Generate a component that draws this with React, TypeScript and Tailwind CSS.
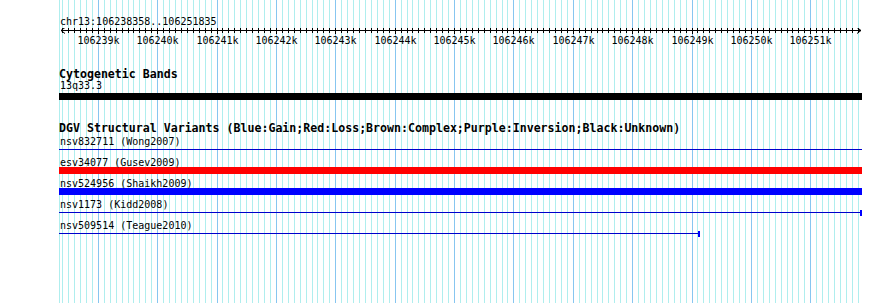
const START = 106238358;
const END = 106251835;
const X0 = 60.2;
const PX = 0.05937;

function toX(bp: number) {
  return Math.floor(X0 + (bp - START) * PX) + 0.5;
}

const ticks: number[] = [];
for (let bp = Math.ceil(START / 100) * 100; bp <= END; bp += 100) ticks.push(bp);

interface Variant {
  id: string;
  study: string;
  kind: "line" | "bar";
  color: string;
  end: number;
  cap: boolean;
}

const variants: Variant[] = [
  { id: "nsv832711", study: "Wong2007", kind: "line", color: "bg-[#0000cc]", end: 862, cap: false },
  { id: "esv34077", study: "Gusev2009", kind: "bar", color: "bg-[#ff0000]", end: 862, cap: false },
  { id: "nsv524956", study: "Shaikh2009", kind: "bar", color: "bg-[#0000ff]", end: 862, cap: false },
  { id: "nsv1173", study: "Kidd2008", kind: "line", color: "bg-[#0000cc]", end: 862, cap: true },
  { id: "nsv509514", study: "Teague2010", kind: "line", color: "bg-[#0000cc]", end: 700, cap: true },
];

function Grid() {
  return (
    <svg className="absolute inset-0" width={890} height={303} shapeRendering="crispEdges">
      <line x1={59.5} y1={0} x2={59.5} y2={303} stroke="#afeeee" />
      {ticks.map((bp) => (
        <line
          key={bp}
          x1={toX(bp)}
          y1={0}
          x2={toX(bp)}
          y2={303}
          stroke={bp % 1000 === 0 ? "#87c6f0" : "#afeeee"}
        />
      ))}
    </svg>
  );
}

function Axis() {
  const majors = ticks.filter((bp) => bp % 1000 === 0);
  return (
    <svg className="relative block" width={890} height={20}>
      <g shapeRendering="crispEdges" stroke="#000">
        <line x1={61} y1={2.5} x2={861} y2={2.5} />
        {ticks.map((bp) => (
          <line key={bp} x1={toX(bp)} y1={0} x2={toX(bp)} y2={bp % 1000 === 0 ? 6 : 5} />
        ))}
      </g>
      <polyline points="65,-0.5 61,2.5 65,5.5" fill="none" stroke="#000" />
      <polyline points="857,-0.5 861,2.5 857,5.5" fill="none" stroke="#000" />
      {majors.map((bp) => (
        <text
          key={bp}
          x={toX(bp)}
          y={16}
          textAnchor="middle"
          fontSize={10}
          fontFamily="'DejaVu Sans Mono', monospace"
          fill="#000"
        >
          {bp / 1000}k
        </text>
      ))}
    </svg>
  );
}

function VariantRow({ v }: { v: Variant }) {
  return (
    <div className="mb-[4px]">
      <div className="h-[10px] pl-[60px] text-[10px] leading-[12px] whitespace-pre">
        {v.id} ({v.study})
      </div>
      {v.kind === "bar" ? (
        <div className={`ml-[59px] h-[7px] w-[803px] ${v.color}`} />
      ) : (
        <div className="ml-[59px] flex h-[7px] items-start">
          <div className={`mt-[3px] h-px ${v.color}`} style={{ width: v.end - 59 - (v.cap ? 2 : 0) }} />
          {v.cap && <div className="mt-[1px] h-[6px] w-[2px] bg-[#0000ff]" />}
        </div>
      )}
    </div>
  );
}

export default function App() {
  return (
    <div className="relative h-[303px] w-[890px] overflow-hidden bg-white text-black [font-family:'DejaVu_Sans_Mono',monospace]">
      <Grid />
      <div className="relative pt-[15px]">
        {/* Ruler */}
        <div className="pl-[60px] text-[10px] leading-[13px]">chr13:106238358..106251835</div>
        <Axis />

        {/* Cytogenetic bands */}
        <div className="mt-[20px] pl-[59px] text-[11.6px] font-bold leading-[12px]">Cytogenetic Bands</div>
        <div className="pl-[60px] text-[10px] leading-[11px]">13q33.3</div>
        <div className="mt-[2px] ml-[59px] h-[7px] w-[803px] bg-black" />

        {/* DGV */}
        <div className="mt-[22px] pl-[59px] text-[11.6px] font-bold leading-[12px] whitespace-pre">
          DGV Structural Variants (Blue:Gain;Red:Loss;Brown:Complex;Purple:Inversion;Black:Unknown)
        </div>
        <div className="mt-[2px]">
          {variants.map((v) => (
            <VariantRow key={v.id} v={v} />
          ))}
        </div>
      </div>
    </div>
  );
}
